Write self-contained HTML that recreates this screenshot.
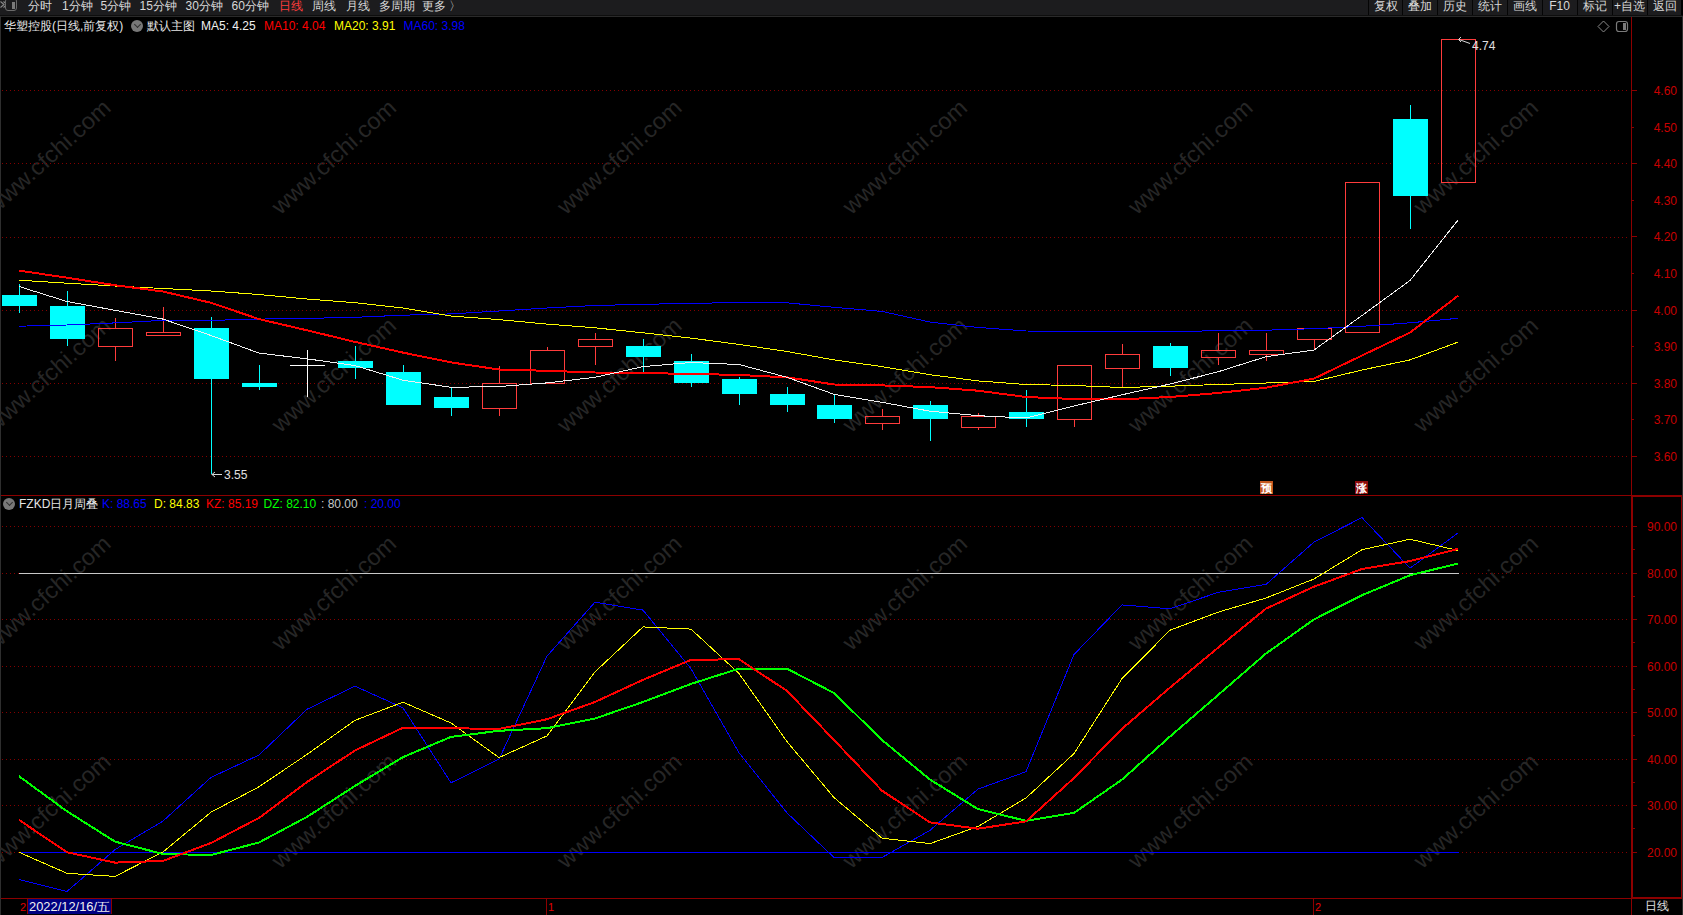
<!DOCTYPE html>
<html><head><meta charset="utf-8"><style>
html,body{margin:0;padding:0;background:#000;width:1683px;height:915px;overflow:hidden}
#wrap{position:relative;width:1683px;height:915px}
svg{position:absolute;left:0;top:0}
.t{position:absolute;white-space:nowrap;font-family:"Liberation Sans",sans-serif;font-size:12px;line-height:14px}
</style></head><body><div id="wrap">
<svg width="1683" height="915" viewBox="0 0 1683 915">
<rect x="0" y="0" width="1683" height="915" fill="#000"/>
<rect x="0" y="0" width="1683" height="15" fill="#1c1c1e"/>
<rect x="0" y="15" width="1683" height="1" fill="#0e0e0e"/>
<rect x="0" y="16" width="1683" height="1" fill="#2a2a2a"/>
<rect x="0" y="16" width="1" height="899" fill="#2e2e2e"/>
<rect x="1682" y="16" width="1" height="899" fill="#2e2e2e"/>
<text x="49.5" y="158.0" transform="rotate(-42 49.5 158.0)" text-anchor="middle" dominant-baseline="middle" font-size="23" fill="#262626" font-family='"Liberation Sans", sans-serif' textLength="158" lengthAdjust="spacingAndGlyphs">www.cfchi.com</text><text x="335.0" y="158.0" transform="rotate(-42 335.0 158.0)" text-anchor="middle" dominant-baseline="middle" font-size="23" fill="#262626" font-family='"Liberation Sans", sans-serif' textLength="158" lengthAdjust="spacingAndGlyphs">www.cfchi.com</text><text x="620.5" y="158.0" transform="rotate(-42 620.5 158.0)" text-anchor="middle" dominant-baseline="middle" font-size="23" fill="#262626" font-family='"Liberation Sans", sans-serif' textLength="158" lengthAdjust="spacingAndGlyphs">www.cfchi.com</text><text x="906.0" y="158.0" transform="rotate(-42 906.0 158.0)" text-anchor="middle" dominant-baseline="middle" font-size="23" fill="#262626" font-family='"Liberation Sans", sans-serif' textLength="158" lengthAdjust="spacingAndGlyphs">www.cfchi.com</text><text x="1191.5" y="158.0" transform="rotate(-42 1191.5 158.0)" text-anchor="middle" dominant-baseline="middle" font-size="23" fill="#262626" font-family='"Liberation Sans", sans-serif' textLength="158" lengthAdjust="spacingAndGlyphs">www.cfchi.com</text><text x="1477.0" y="158.0" transform="rotate(-42 1477.0 158.0)" text-anchor="middle" dominant-baseline="middle" font-size="23" fill="#262626" font-family='"Liberation Sans", sans-serif' textLength="158" lengthAdjust="spacingAndGlyphs">www.cfchi.com</text><text x="49.5" y="376.0" transform="rotate(-42 49.5 376.0)" text-anchor="middle" dominant-baseline="middle" font-size="23" fill="#262626" font-family='"Liberation Sans", sans-serif' textLength="158" lengthAdjust="spacingAndGlyphs">www.cfchi.com</text><text x="335.0" y="376.0" transform="rotate(-42 335.0 376.0)" text-anchor="middle" dominant-baseline="middle" font-size="23" fill="#262626" font-family='"Liberation Sans", sans-serif' textLength="158" lengthAdjust="spacingAndGlyphs">www.cfchi.com</text><text x="620.5" y="376.0" transform="rotate(-42 620.5 376.0)" text-anchor="middle" dominant-baseline="middle" font-size="23" fill="#262626" font-family='"Liberation Sans", sans-serif' textLength="158" lengthAdjust="spacingAndGlyphs">www.cfchi.com</text><text x="906.0" y="376.0" transform="rotate(-42 906.0 376.0)" text-anchor="middle" dominant-baseline="middle" font-size="23" fill="#262626" font-family='"Liberation Sans", sans-serif' textLength="158" lengthAdjust="spacingAndGlyphs">www.cfchi.com</text><text x="1191.5" y="376.0" transform="rotate(-42 1191.5 376.0)" text-anchor="middle" dominant-baseline="middle" font-size="23" fill="#262626" font-family='"Liberation Sans", sans-serif' textLength="158" lengthAdjust="spacingAndGlyphs">www.cfchi.com</text><text x="1477.0" y="376.0" transform="rotate(-42 1477.0 376.0)" text-anchor="middle" dominant-baseline="middle" font-size="23" fill="#262626" font-family='"Liberation Sans", sans-serif' textLength="158" lengthAdjust="spacingAndGlyphs">www.cfchi.com</text><text x="49.5" y="594.0" transform="rotate(-42 49.5 594.0)" text-anchor="middle" dominant-baseline="middle" font-size="23" fill="#262626" font-family='"Liberation Sans", sans-serif' textLength="158" lengthAdjust="spacingAndGlyphs">www.cfchi.com</text><text x="335.0" y="594.0" transform="rotate(-42 335.0 594.0)" text-anchor="middle" dominant-baseline="middle" font-size="23" fill="#262626" font-family='"Liberation Sans", sans-serif' textLength="158" lengthAdjust="spacingAndGlyphs">www.cfchi.com</text><text x="620.5" y="594.0" transform="rotate(-42 620.5 594.0)" text-anchor="middle" dominant-baseline="middle" font-size="23" fill="#262626" font-family='"Liberation Sans", sans-serif' textLength="158" lengthAdjust="spacingAndGlyphs">www.cfchi.com</text><text x="906.0" y="594.0" transform="rotate(-42 906.0 594.0)" text-anchor="middle" dominant-baseline="middle" font-size="23" fill="#262626" font-family='"Liberation Sans", sans-serif' textLength="158" lengthAdjust="spacingAndGlyphs">www.cfchi.com</text><text x="1191.5" y="594.0" transform="rotate(-42 1191.5 594.0)" text-anchor="middle" dominant-baseline="middle" font-size="23" fill="#262626" font-family='"Liberation Sans", sans-serif' textLength="158" lengthAdjust="spacingAndGlyphs">www.cfchi.com</text><text x="1477.0" y="594.0" transform="rotate(-42 1477.0 594.0)" text-anchor="middle" dominant-baseline="middle" font-size="23" fill="#262626" font-family='"Liberation Sans", sans-serif' textLength="158" lengthAdjust="spacingAndGlyphs">www.cfchi.com</text><text x="49.5" y="812.0" transform="rotate(-42 49.5 812.0)" text-anchor="middle" dominant-baseline="middle" font-size="23" fill="#262626" font-family='"Liberation Sans", sans-serif' textLength="158" lengthAdjust="spacingAndGlyphs">www.cfchi.com</text><text x="335.0" y="812.0" transform="rotate(-42 335.0 812.0)" text-anchor="middle" dominant-baseline="middle" font-size="23" fill="#262626" font-family='"Liberation Sans", sans-serif' textLength="158" lengthAdjust="spacingAndGlyphs">www.cfchi.com</text><text x="620.5" y="812.0" transform="rotate(-42 620.5 812.0)" text-anchor="middle" dominant-baseline="middle" font-size="23" fill="#262626" font-family='"Liberation Sans", sans-serif' textLength="158" lengthAdjust="spacingAndGlyphs">www.cfchi.com</text><text x="906.0" y="812.0" transform="rotate(-42 906.0 812.0)" text-anchor="middle" dominant-baseline="middle" font-size="23" fill="#262626" font-family='"Liberation Sans", sans-serif' textLength="158" lengthAdjust="spacingAndGlyphs">www.cfchi.com</text><text x="1191.5" y="812.0" transform="rotate(-42 1191.5 812.0)" text-anchor="middle" dominant-baseline="middle" font-size="23" fill="#262626" font-family='"Liberation Sans", sans-serif' textLength="158" lengthAdjust="spacingAndGlyphs">www.cfchi.com</text><text x="1477.0" y="812.0" transform="rotate(-42 1477.0 812.0)" text-anchor="middle" dominant-baseline="middle" font-size="23" fill="#262626" font-family='"Liberation Sans", sans-serif' textLength="158" lengthAdjust="spacingAndGlyphs">www.cfchi.com</text>
<line x1="2" y1="90.5" x2="1628" y2="90.5" stroke="#840000" stroke-width="1" stroke-dasharray="1 3"/>
<line x1="2" y1="163.5" x2="1628" y2="163.5" stroke="#840000" stroke-width="1" stroke-dasharray="1 3"/>
<line x1="2" y1="237.5" x2="1628" y2="237.5" stroke="#840000" stroke-width="1" stroke-dasharray="1 3"/>
<line x1="2" y1="310.5" x2="1628" y2="310.5" stroke="#840000" stroke-width="1" stroke-dasharray="1 3"/>
<line x1="2" y1="383.5" x2="1628" y2="383.5" stroke="#840000" stroke-width="1" stroke-dasharray="1 3"/>
<line x1="2" y1="456.5" x2="1628" y2="456.5" stroke="#840000" stroke-width="1" stroke-dasharray="1 3"/>
<line x1="2" y1="526.5" x2="1628" y2="526.5" stroke="#840000" stroke-width="1" stroke-dasharray="1 3"/>
<line x1="2" y1="573.5" x2="1628" y2="573.5" stroke="#840000" stroke-width="1" stroke-dasharray="1 3"/>
<line x1="2" y1="619.5" x2="1628" y2="619.5" stroke="#840000" stroke-width="1" stroke-dasharray="1 3"/>
<line x1="2" y1="666.5" x2="1628" y2="666.5" stroke="#840000" stroke-width="1" stroke-dasharray="1 3"/>
<line x1="2" y1="712.5" x2="1628" y2="712.5" stroke="#840000" stroke-width="1" stroke-dasharray="1 3"/>
<line x1="2" y1="759.5" x2="1628" y2="759.5" stroke="#840000" stroke-width="1" stroke-dasharray="1 3"/>
<line x1="2" y1="805.5" x2="1628" y2="805.5" stroke="#840000" stroke-width="1" stroke-dasharray="1 3"/>
<line x1="2" y1="852.5" x2="1628" y2="852.5" stroke="#840000" stroke-width="1" stroke-dasharray="1 3"/>
<rect x="1631" y="17" width="1" height="898" fill="#8c0000"/>
<rect x="1" y="495" width="1630" height="1" fill="#8c0000"/>
<rect x="1" y="898" width="1681" height="1" fill="#8c0000"/>
<rect x="1632" y="495" width="50" height="2" fill="#8c0000"/>
<rect x="1632" y="495" width="1" height="403" fill="#8c0000"/>
<rect x="1681" y="495" width="1" height="403" fill="#8c0000"/>
<rect x="1632" y="897" width="50" height="1" fill="#8c0000"/>
<rect x="1632" y="90" width="5" height="1" fill="#8c0000"/>
<text x="1677" y="95.0" text-anchor="end" font-size="12" fill="#c80000" font-family='"Liberation Sans", sans-serif'>4.60</text>
<rect x="1632" y="127" width="2" height="1" fill="#8c0000"/>
<text x="1677" y="132.0" text-anchor="end" font-size="12" fill="#c80000" font-family='"Liberation Sans", sans-serif'>4.50</text>
<rect x="1632" y="163" width="5" height="1" fill="#8c0000"/>
<text x="1677" y="168.0" text-anchor="end" font-size="12" fill="#c80000" font-family='"Liberation Sans", sans-serif'>4.40</text>
<rect x="1632" y="200" width="2" height="1" fill="#8c0000"/>
<text x="1677" y="205.0" text-anchor="end" font-size="12" fill="#c80000" font-family='"Liberation Sans", sans-serif'>4.30</text>
<rect x="1632" y="236" width="5" height="1" fill="#8c0000"/>
<text x="1677" y="241.0" text-anchor="end" font-size="12" fill="#c80000" font-family='"Liberation Sans", sans-serif'>4.20</text>
<rect x="1632" y="273" width="2" height="1" fill="#8c0000"/>
<text x="1677" y="278.0" text-anchor="end" font-size="12" fill="#c80000" font-family='"Liberation Sans", sans-serif'>4.10</text>
<rect x="1632" y="310" width="5" height="1" fill="#8c0000"/>
<text x="1677" y="315.0" text-anchor="end" font-size="12" fill="#c80000" font-family='"Liberation Sans", sans-serif'>4.00</text>
<rect x="1632" y="346" width="2" height="1" fill="#8c0000"/>
<text x="1677" y="351.0" text-anchor="end" font-size="12" fill="#c80000" font-family='"Liberation Sans", sans-serif'>3.90</text>
<rect x="1632" y="383" width="5" height="1" fill="#8c0000"/>
<text x="1677" y="388.0" text-anchor="end" font-size="12" fill="#c80000" font-family='"Liberation Sans", sans-serif'>3.80</text>
<rect x="1632" y="419" width="2" height="1" fill="#8c0000"/>
<text x="1677" y="424.0" text-anchor="end" font-size="12" fill="#c80000" font-family='"Liberation Sans", sans-serif'>3.70</text>
<rect x="1632" y="456" width="5" height="1" fill="#8c0000"/>
<text x="1677" y="461.0" text-anchor="end" font-size="12" fill="#c80000" font-family='"Liberation Sans", sans-serif'>3.60</text>
<rect x="1633" y="526" width="4" height="1" fill="#8c0000"/>
<rect x="1633" y="549" width="2" height="1" fill="#8c0000"/>
<text x="1677" y="530.5" text-anchor="end" font-size="12" fill="#c80000" font-family='"Liberation Sans", sans-serif'>90.00</text>
<rect x="1633" y="573" width="4" height="1" fill="#8c0000"/>
<rect x="1633" y="596" width="2" height="1" fill="#8c0000"/>
<text x="1677" y="577.5" text-anchor="end" font-size="12" fill="#c80000" font-family='"Liberation Sans", sans-serif'>80.00</text>
<rect x="1633" y="619" width="4" height="1" fill="#8c0000"/>
<rect x="1633" y="642" width="2" height="1" fill="#8c0000"/>
<text x="1677" y="623.5" text-anchor="end" font-size="12" fill="#c80000" font-family='"Liberation Sans", sans-serif'>70.00</text>
<rect x="1633" y="666" width="4" height="1" fill="#8c0000"/>
<rect x="1633" y="689" width="2" height="1" fill="#8c0000"/>
<text x="1677" y="670.5" text-anchor="end" font-size="12" fill="#c80000" font-family='"Liberation Sans", sans-serif'>60.00</text>
<rect x="1633" y="712" width="4" height="1" fill="#8c0000"/>
<rect x="1633" y="735" width="2" height="1" fill="#8c0000"/>
<text x="1677" y="716.5" text-anchor="end" font-size="12" fill="#c80000" font-family='"Liberation Sans", sans-serif'>50.00</text>
<rect x="1633" y="759" width="4" height="1" fill="#8c0000"/>
<rect x="1633" y="782" width="2" height="1" fill="#8c0000"/>
<text x="1677" y="763.5" text-anchor="end" font-size="12" fill="#c80000" font-family='"Liberation Sans", sans-serif'>40.00</text>
<rect x="1633" y="805" width="4" height="1" fill="#8c0000"/>
<rect x="1633" y="828" width="2" height="1" fill="#8c0000"/>
<text x="1677" y="809.5" text-anchor="end" font-size="12" fill="#c80000" font-family='"Liberation Sans", sans-serif'>30.00</text>
<rect x="1633" y="852" width="4" height="1" fill="#8c0000"/>
<text x="1677" y="856.5" text-anchor="end" font-size="12" fill="#c80000" font-family='"Liberation Sans", sans-serif'>20.00</text>
<rect x="19" y="284" width="1" height="11" fill="#00ffff"/>
<rect x="19" y="306" width="1" height="7" fill="#00ffff"/>
<rect x="2" y="295" width="35" height="11" fill="#00ffff"/>
<rect x="67" y="291" width="1" height="15" fill="#00ffff"/>
<rect x="67" y="339" width="1" height="7" fill="#00ffff"/>
<rect x="50" y="306" width="35" height="33" fill="#00ffff"/>
<rect x="115" y="318" width="1" height="10" fill="#ff3c3c"/>
<rect x="115" y="346" width="1" height="15" fill="#ff3c3c"/>
<rect x="98.5" y="328.5" width="34" height="18" fill="none" stroke="#ff3c3c" stroke-width="1"/>
<rect x="163" y="307" width="1" height="25" fill="#ff3c3c"/>
<rect x="146.5" y="332.5" width="34" height="3" fill="none" stroke="#ff3c3c" stroke-width="1"/>
<rect x="211" y="317" width="1" height="11" fill="#00ffff"/>
<rect x="211" y="379" width="1" height="95" fill="#00ffff"/>
<rect x="194" y="328" width="35" height="51" fill="#00ffff"/>
<rect x="259" y="365" width="1" height="18" fill="#00ffff"/>
<rect x="259" y="387" width="1" height="3" fill="#00ffff"/>
<rect x="242" y="383" width="35" height="4" fill="#00ffff"/>
<rect x="307" y="350" width="1" height="47" fill="#fff"/>
<rect x="290" y="365" width="35" height="1" fill="#fff"/>
<rect x="355" y="346" width="1" height="15" fill="#00ffff"/>
<rect x="355" y="368" width="1" height="11" fill="#00ffff"/>
<rect x="338" y="361" width="35" height="7" fill="#00ffff"/>
<rect x="403" y="365" width="1" height="7" fill="#00ffff"/>
<rect x="386" y="372" width="35" height="33" fill="#00ffff"/>
<rect x="451" y="387" width="1" height="10" fill="#00ffff"/>
<rect x="451" y="408" width="1" height="8" fill="#00ffff"/>
<rect x="434" y="397" width="35" height="11" fill="#00ffff"/>
<rect x="499" y="366" width="1" height="17" fill="#ff3c3c"/>
<rect x="499" y="409" width="1" height="7" fill="#ff3c3c"/>
<rect x="482.5" y="383.5" width="34" height="25" fill="none" stroke="#ff3c3c" stroke-width="1"/>
<rect x="547" y="347" width="1" height="3" fill="#ff3c3c"/>
<rect x="530.5" y="350.5" width="34" height="33" fill="none" stroke="#ff3c3c" stroke-width="1"/>
<rect x="595" y="333" width="1" height="6" fill="#ff3c3c"/>
<rect x="595" y="347" width="1" height="18" fill="#ff3c3c"/>
<rect x="578.5" y="339.5" width="34" height="7" fill="none" stroke="#ff3c3c" stroke-width="1"/>
<rect x="643" y="339" width="1" height="7" fill="#00ffff"/>
<rect x="643" y="357" width="1" height="15" fill="#00ffff"/>
<rect x="626" y="346" width="35" height="11" fill="#00ffff"/>
<rect x="691" y="354" width="1" height="7" fill="#00ffff"/>
<rect x="691" y="383" width="1" height="4" fill="#00ffff"/>
<rect x="674" y="361" width="35" height="22" fill="#00ffff"/>
<rect x="739" y="377" width="1" height="2" fill="#00ffff"/>
<rect x="739" y="394" width="1" height="11" fill="#00ffff"/>
<rect x="722" y="379" width="35" height="15" fill="#00ffff"/>
<rect x="787" y="387" width="1" height="7" fill="#00ffff"/>
<rect x="787" y="405" width="1" height="7" fill="#00ffff"/>
<rect x="770" y="394" width="35" height="11" fill="#00ffff"/>
<rect x="834" y="394" width="1" height="11" fill="#00ffff"/>
<rect x="834" y="419" width="1" height="4" fill="#00ffff"/>
<rect x="817" y="405" width="35" height="14" fill="#00ffff"/>
<rect x="882" y="409" width="1" height="7" fill="#ff3c3c"/>
<rect x="882" y="424" width="1" height="6" fill="#ff3c3c"/>
<rect x="865.5" y="416.5" width="34" height="7" fill="none" stroke="#ff3c3c" stroke-width="1"/>
<rect x="930" y="401" width="1" height="4" fill="#00ffff"/>
<rect x="930" y="419" width="1" height="22" fill="#00ffff"/>
<rect x="913" y="405" width="35" height="14" fill="#00ffff"/>
<rect x="978" y="413" width="1" height="3" fill="#ff3c3c"/>
<rect x="978" y="428" width="1" height="2" fill="#ff3c3c"/>
<rect x="961.5" y="416.5" width="34" height="11" fill="none" stroke="#ff3c3c" stroke-width="1"/>
<rect x="1026" y="390" width="1" height="22" fill="#00ffff"/>
<rect x="1026" y="419" width="1" height="8" fill="#00ffff"/>
<rect x="1009" y="412" width="35" height="7" fill="#00ffff"/>
<rect x="1074" y="420" width="1" height="7" fill="#ff3c3c"/>
<rect x="1057.5" y="365.5" width="34" height="54" fill="none" stroke="#ff3c3c" stroke-width="1"/>
<rect x="1122" y="344" width="1" height="10" fill="#ff3c3c"/>
<rect x="1122" y="368" width="1" height="19" fill="#ff3c3c"/>
<rect x="1105.5" y="354.5" width="34" height="14" fill="none" stroke="#ff3c3c" stroke-width="1"/>
<rect x="1170" y="343" width="1" height="3" fill="#00ffff"/>
<rect x="1170" y="368" width="1" height="8" fill="#00ffff"/>
<rect x="1153" y="346" width="35" height="22" fill="#00ffff"/>
<rect x="1218" y="333" width="1" height="17" fill="#ff3c3c"/>
<rect x="1218" y="357" width="1" height="8" fill="#ff3c3c"/>
<rect x="1201.5" y="350.5" width="34" height="7" fill="none" stroke="#ff3c3c" stroke-width="1"/>
<rect x="1266" y="333" width="1" height="17" fill="#ff3c3c"/>
<rect x="1266" y="354" width="1" height="7" fill="#ff3c3c"/>
<rect x="1249.5" y="350.5" width="34" height="4" fill="none" stroke="#ff3c3c" stroke-width="1"/>
<rect x="1314" y="339" width="1" height="11" fill="#ff3c3c"/>
<rect x="1297.5" y="328.5" width="34" height="11" fill="none" stroke="#ff3c3c" stroke-width="1"/>
<rect x="1345.5" y="182.5" width="34" height="150" fill="none" stroke="#ff3c3c" stroke-width="1"/>
<rect x="1410" y="105" width="1" height="14" fill="#00ffff"/>
<rect x="1410" y="196" width="1" height="33" fill="#00ffff"/>
<rect x="1393" y="119" width="35" height="77" fill="#00ffff"/>
<rect x="1441.5" y="39.5" width="34" height="143" fill="none" stroke="#ff3c3c" stroke-width="1"/>
<polyline points="19,326.2 67,325.0 115,322.9 163,320.4 211,320.4 259,319.1 307,318.4 355,317.3 403,315.2 451,313.9 499,311.0 547,308.0 595,305.5 643,304.3 691,303.4 739,302.5 787,302.8 834,307.3 882,311.4 930,322.1 978,327.4 1026,331.0 1074,331.4 1122,331.4 1170,331.4 1218,330.8 1266,330.2 1314,328.7 1362,326.3 1410,322.8 1458,318.3" fill="none" stroke="#0000ff" stroke-width="1" stroke-linejoin="round" shape-rendering="crispEdges"/>
<polyline points="19,280.2 67,283.2 115,286.0 163,288.5 211,291.0 259,294.5 307,299.0 355,302.7 403,308.0 451,316.0 499,319.6 547,324.1 595,327.8 643,332.8 691,338.1 739,344.4 787,351.5 834,359.9 882,366.6 930,374.7 978,380.9 1026,384.5 1074,385.5 1122,387.5 1170,386.2 1218,384.5 1266,383.0 1314,381.5 1362,370.0 1410,359.9 1458,342.1" fill="none" stroke="#ffff00" stroke-width="1" stroke-linejoin="round" shape-rendering="crispEdges"/>
<polyline points="19,270.6 67,277.7 115,285.2 163,291.5 211,302.8 259,319.1 307,330.3 355,341.9 403,352.6 451,362.4 499,369.5 547,370.8 595,372.5 643,373.2 691,373.8 739,375.0 787,377.3 834,384.5 882,385.4 930,387.1 978,390.7 1026,397.0 1074,399.0 1122,399.3 1170,397.0 1218,393.0 1266,387.7 1314,378.6 1362,355.5 1410,332.6 1458,295.8" fill="none" stroke="#ff0000" stroke-width="2" stroke-linejoin="round" shape-rendering="crispEdges"/>
<polyline points="19,286.5 67,301.5 115,310.3 163,319.1 211,335.5 259,353.1 307,358.8 355,365.6 403,380.2 451,387.3 499,386.5 547,382.9 595,377.3 643,366.6 691,362.5 739,364.5 787,377.3 834,394.3 882,402.3 930,411.2 978,415.7 1026,418.0 1074,406.0 1122,394.8 1170,384.0 1218,371.8 1266,356.7 1314,350.0 1362,315.5 1410,280.5 1458,220.1" fill="none" stroke="#f0f0f0" stroke-width="1" stroke-linejoin="round" shape-rendering="crispEdges"/>
<line x1="211.5" y1="474.5" x2="222" y2="474.5" stroke="#d8d8d8" stroke-width="1"/>
<polyline points="215,472 212,474.5 215,477" fill="none" stroke="#d8d8d8" stroke-width="1"/>
<text x="224" y="479" font-size="12" fill="#e0e0e0" font-family='"Liberation Sans", sans-serif'>3.55</text>
<line x1="1459" y1="39.5" x2="1470" y2="43.5" stroke="#d8d8d8" stroke-width="1"/>
<polyline points="1461,37 1458.5,39.5 1461,42" fill="none" stroke="#d8d8d8" stroke-width="1"/>
<text x="1472" y="50" font-size="12" fill="#e0e0e0" font-family='"Liberation Sans", sans-serif'>4.74</text>
<rect x="1260" y="481" width="13" height="13" fill="#c4561c"/>
<text x="1266.5" y="492" text-anchor="middle" font-size="11" font-weight="bold" fill="#fff" font-family='"Liberation Sans", sans-serif'>预</text>
<rect x="1355" y="481" width="13" height="13" fill="#8c0a0a"/>
<text x="1361.5" y="492" text-anchor="middle" font-size="11" font-weight="bold" fill="#fff" font-family='"Liberation Sans", sans-serif'>涨</text>
<rect x="19" y="573" width="1440" height="1" fill="#c8c8c8"/>
<rect x="19" y="852" width="1440" height="1" fill="#0000ff"/>
<polyline points="19,879.6 67,891.5 115,849.6 163,821.1 211,777.4 259,755.0 307,709.3 355,686.2 403,707.8 451,782.8 499,759.2 547,656.1 595,602.2 643,610.1 691,668.7 739,752.7 787,812.9 834,857.5 882,857.5 930,830.3 978,789.1 1026,771.7 1074,654.5 1122,604.9 1170,608.8 1218,592.4 1266,584.4 1314,542.1 1362,517.6 1410,568.2 1458,533.0" fill="none" stroke="#0000ff" stroke-width="1" stroke-linejoin="round" shape-rendering="crispEdges"/>
<polyline points="19,852.3 67,873.3 115,876.4 163,852.0 211,812.2 259,786.8 307,754.4 355,720.3 403,702.2 451,723.0 499,757.6 547,735.9 595,671.9 643,626.9 691,629.1 739,673.5 787,741.6 834,797.5 882,838.2 930,843.6 978,826.5 1026,798.0 1074,753.6 1122,678.6 1170,630.2 1218,612.2 1266,598.0 1314,579.0 1362,549.7 1410,539.2 1458,550.5" fill="none" stroke="#ffff00" stroke-width="1" stroke-linejoin="round" shape-rendering="crispEdges"/>
<polyline points="19,776.2 67,811.3 115,841.6 163,854.0 211,855.0 259,842.5 307,816.9 355,785.9 403,757.1 451,736.9 499,730.8 547,728.2 595,718.5 643,702.0 691,683.9 739,668.7 787,668.7 834,693.0 882,740.0 930,779.6 978,809.1 1026,820.8 1074,812.9 1122,779.6 1170,736.5 1218,695.1 1266,653.5 1314,619.4 1362,595.2 1410,575.3 1458,563.5" fill="none" stroke="#00ff00" stroke-width="2" stroke-linejoin="round" shape-rendering="crispEdges"/>
<polyline points="19,819.9 67,852.3 115,862.6 163,860.9 211,843.0 259,817.9 307,782.0 355,750.5 403,727.7 451,728.2 499,729.0 547,719.2 595,702.0 643,679.8 691,659.9 739,659.2 787,690.9 834,740.0 882,790.7 930,822.4 978,828.7 1026,821.4 1074,778.0 1122,728.8 1170,687.6 1218,647.8 1266,608.6 1314,586.7 1362,569.0 1410,561.1 1458,548.9" fill="none" stroke="#ff0000" stroke-width="2" stroke-linejoin="round" shape-rendering="crispEdges"/>
<rect x="546" y="899" width="1" height="16" fill="#8c0000"/>
<text x="548" y="911" font-size="11" fill="#e00000" font-family='"Liberation Sans", sans-serif'>1</text>
<rect x="1313" y="899" width="1" height="16" fill="#8c0000"/>
<text x="1315" y="911" font-size="11" fill="#e00000" font-family='"Liberation Sans", sans-serif'>2</text>
<text x="20" y="911" font-size="11" fill="#e00000" font-family='"Liberation Sans", sans-serif'>2</text>
<rect x="27" y="899" width="85" height="15" fill="#8c0000"/>
<rect x="28" y="899" width="83" height="15" fill="#000080"/>
<text x="29" y="911" font-size="12" fill="#f0f0f0" font-family='"Liberation Sans", sans-serif' textLength="81" lengthAdjust="spacingAndGlyphs">2022/12/16/五</text>
<text x="1645" y="910" font-size="12" fill="#e0e0e0" font-family='"Liberation Sans", sans-serif'>日线</text>
<polygon points="1603.5,21 1609,26.5 1603.5,32 1598,26.5" fill="none" stroke="#8a8a8a" stroke-width="1"/>
<rect x="1616.5" y="21.5" width="11" height="10" rx="2.5" fill="none" stroke="#7a7a7a" stroke-width="1.2"/>
<rect x="1623" y="23" width="3" height="7" fill="#7a7a7a"/>
</svg>
<div class="t" style="left:28.0px;top:-1.0px;color:#d8d8d8;font-size:12px;">分时</div>
<div class="t" style="left:62.0px;top:-1.0px;color:#d8d8d8;font-size:12px;">1分钟</div>
<div class="t" style="left:100.5px;top:-1.0px;color:#d8d8d8;font-size:12px;">5分钟</div>
<div class="t" style="left:139.5px;top:-1.0px;color:#d8d8d8;font-size:12px;">15分钟</div>
<div class="t" style="left:185.5px;top:-1.0px;color:#d8d8d8;font-size:12px;">30分钟</div>
<div class="t" style="left:231.5px;top:-1.0px;color:#d8d8d8;font-size:12px;">60分钟</div>
<div class="t" style="left:279.0px;top:-1.0px;color:#ff3c3c;font-size:12px;">日线</div>
<div class="t" style="left:312.0px;top:-1.0px;color:#d8d8d8;font-size:12px;">周线</div>
<div class="t" style="left:346.0px;top:-1.0px;color:#d8d8d8;font-size:12px;">月线</div>
<div class="t" style="left:378.5px;top:-1.0px;color:#d8d8d8;font-size:12px;">多周期</div>
<div class="t" style="left:421.5px;top:-1.0px;color:#d8d8d8;font-size:12px;">更多 〉</div>
<div style="position:absolute;left:1368px;top:0;width:1px;height:15px;background:#050505"></div>
<div style="position:absolute;left:1402px;top:0;width:1px;height:15px;background:#050505"></div>
<div style="position:absolute;left:1437px;top:0;width:1px;height:15px;background:#050505"></div>
<div style="position:absolute;left:1472px;top:0;width:1px;height:15px;background:#050505"></div>
<div style="position:absolute;left:1507px;top:0;width:1px;height:15px;background:#050505"></div>
<div style="position:absolute;left:1542px;top:0;width:1px;height:15px;background:#050505"></div>
<div style="position:absolute;left:1577px;top:0;width:1px;height:15px;background:#050505"></div>
<div style="position:absolute;left:1612px;top:0;width:1px;height:15px;background:#050505"></div>
<div style="position:absolute;left:1647px;top:0;width:1px;height:15px;background:#050505"></div>
<div class="t" style="left:1369px;top:-1px;width:33px;text-align:center;color:#d8d8d8">复权</div>
<div class="t" style="left:1403px;top:-1px;width:33px;text-align:center;color:#d8d8d8">叠加</div>
<div class="t" style="left:1438px;top:-1px;width:33px;text-align:center;color:#d8d8d8">历史</div>
<div class="t" style="left:1473px;top:-1px;width:33px;text-align:center;color:#d8d8d8">统计</div>
<div class="t" style="left:1508px;top:-1px;width:33px;text-align:center;color:#d8d8d8">画线</div>
<div class="t" style="left:1543px;top:-1px;width:33px;text-align:center;color:#d8d8d8">F10</div>
<div class="t" style="left:1578px;top:-1px;width:33px;text-align:center;color:#d8d8d8">标记</div>
<div class="t" style="left:1613px;top:-1px;width:33px;text-align:center;color:#d8d8d8">+自选</div>
<div class="t" style="left:1648px;top:-1px;width:33px;text-align:center;color:#d8d8d8">返回</div>
<div style="position:absolute;left:1681px;top:0;width:2px;height:15px;background:#000"></div>
<svg style="position:absolute;left:0;top:0" width="20" height="14"><polyline points="0.5,1.5 4,4.5 0.5,7.5" fill="none" stroke="#8a8a8a" stroke-width="1.1"/><polyline points="3.5,1.5 7,4.5 3.5,7.5" fill="none" stroke="#8a8a8a" stroke-width="1.1"/><rect x="5.5" y="-1.5" width="11" height="12" rx="2.5" fill="#1c1c1e" stroke="#6a6a6a" stroke-width="1"/><rect x="12" y="2" width="3" height="7" fill="#7a7a7a"/></svg>
<div class="t" style="left:4.0px;top:18.5px;color:#e6e6e6;font-size:12px;">华塑控股(日线,前复权)</div>
<div style="position:absolute;left:131px;top:19.5px;width:12px;height:12px;border-radius:6px;background:#787878"></div>
<div style="position:absolute;left:134.5px;top:21.5px;width:4px;height:4px;border-right:1.3px solid #303030;border-bottom:1.3px solid #303030;transform:rotate(45deg)"></div>
<div class="t" style="left:147.0px;top:18.5px;color:#e6e6e6;font-size:12px;">默认主图</div>
<div class="t" style="left:201.0px;top:18.5px;color:#f0f0f0;font-size:12px;">MA5: 4.25</div>
<div class="t" style="left:264.0px;top:18.5px;color:#ff0000;font-size:12px;">MA10: 4.04</div>
<div class="t" style="left:334.0px;top:18.5px;color:#ffff00;font-size:12px;">MA20: 3.91</div>
<div class="t" style="left:403.5px;top:18.5px;color:#0000ff;font-size:12px;">MA60: 3.98</div>
<div style="position:absolute;left:3px;top:498px;width:12px;height:12px;border-radius:6px;background:#787878"></div>
<div style="position:absolute;left:6.5px;top:500px;width:4px;height:4px;border-right:1.3px solid #303030;border-bottom:1.3px solid #303030;transform:rotate(45deg)"></div>
<div class="t" style="left:19.0px;top:496.5px;color:#e6e6e6;font-size:12px;">FZKD日月周叠</div>
<div class="t" style="left:102.0px;top:496.5px;color:#0000ff;font-size:12px;">K: 88.65</div>
<div class="t" style="left:154.0px;top:496.5px;color:#ffff00;font-size:12px;">D: 84.83</div>
<div class="t" style="left:206.0px;top:496.5px;color:#ff0000;font-size:12px;">KZ: 85.19</div>
<div class="t" style="left:263.5px;top:496.5px;color:#00ff00;font-size:12px;">DZ: 82.10</div>
<div class="t" style="left:321.0px;top:496.5px;color:#c8c8c8;font-size:12px;">: 80.00</div>
<div class="t" style="left:364.0px;top:496.5px;color:#0000ff;font-size:12px;">: 20.00</div>
</div></body></html>
